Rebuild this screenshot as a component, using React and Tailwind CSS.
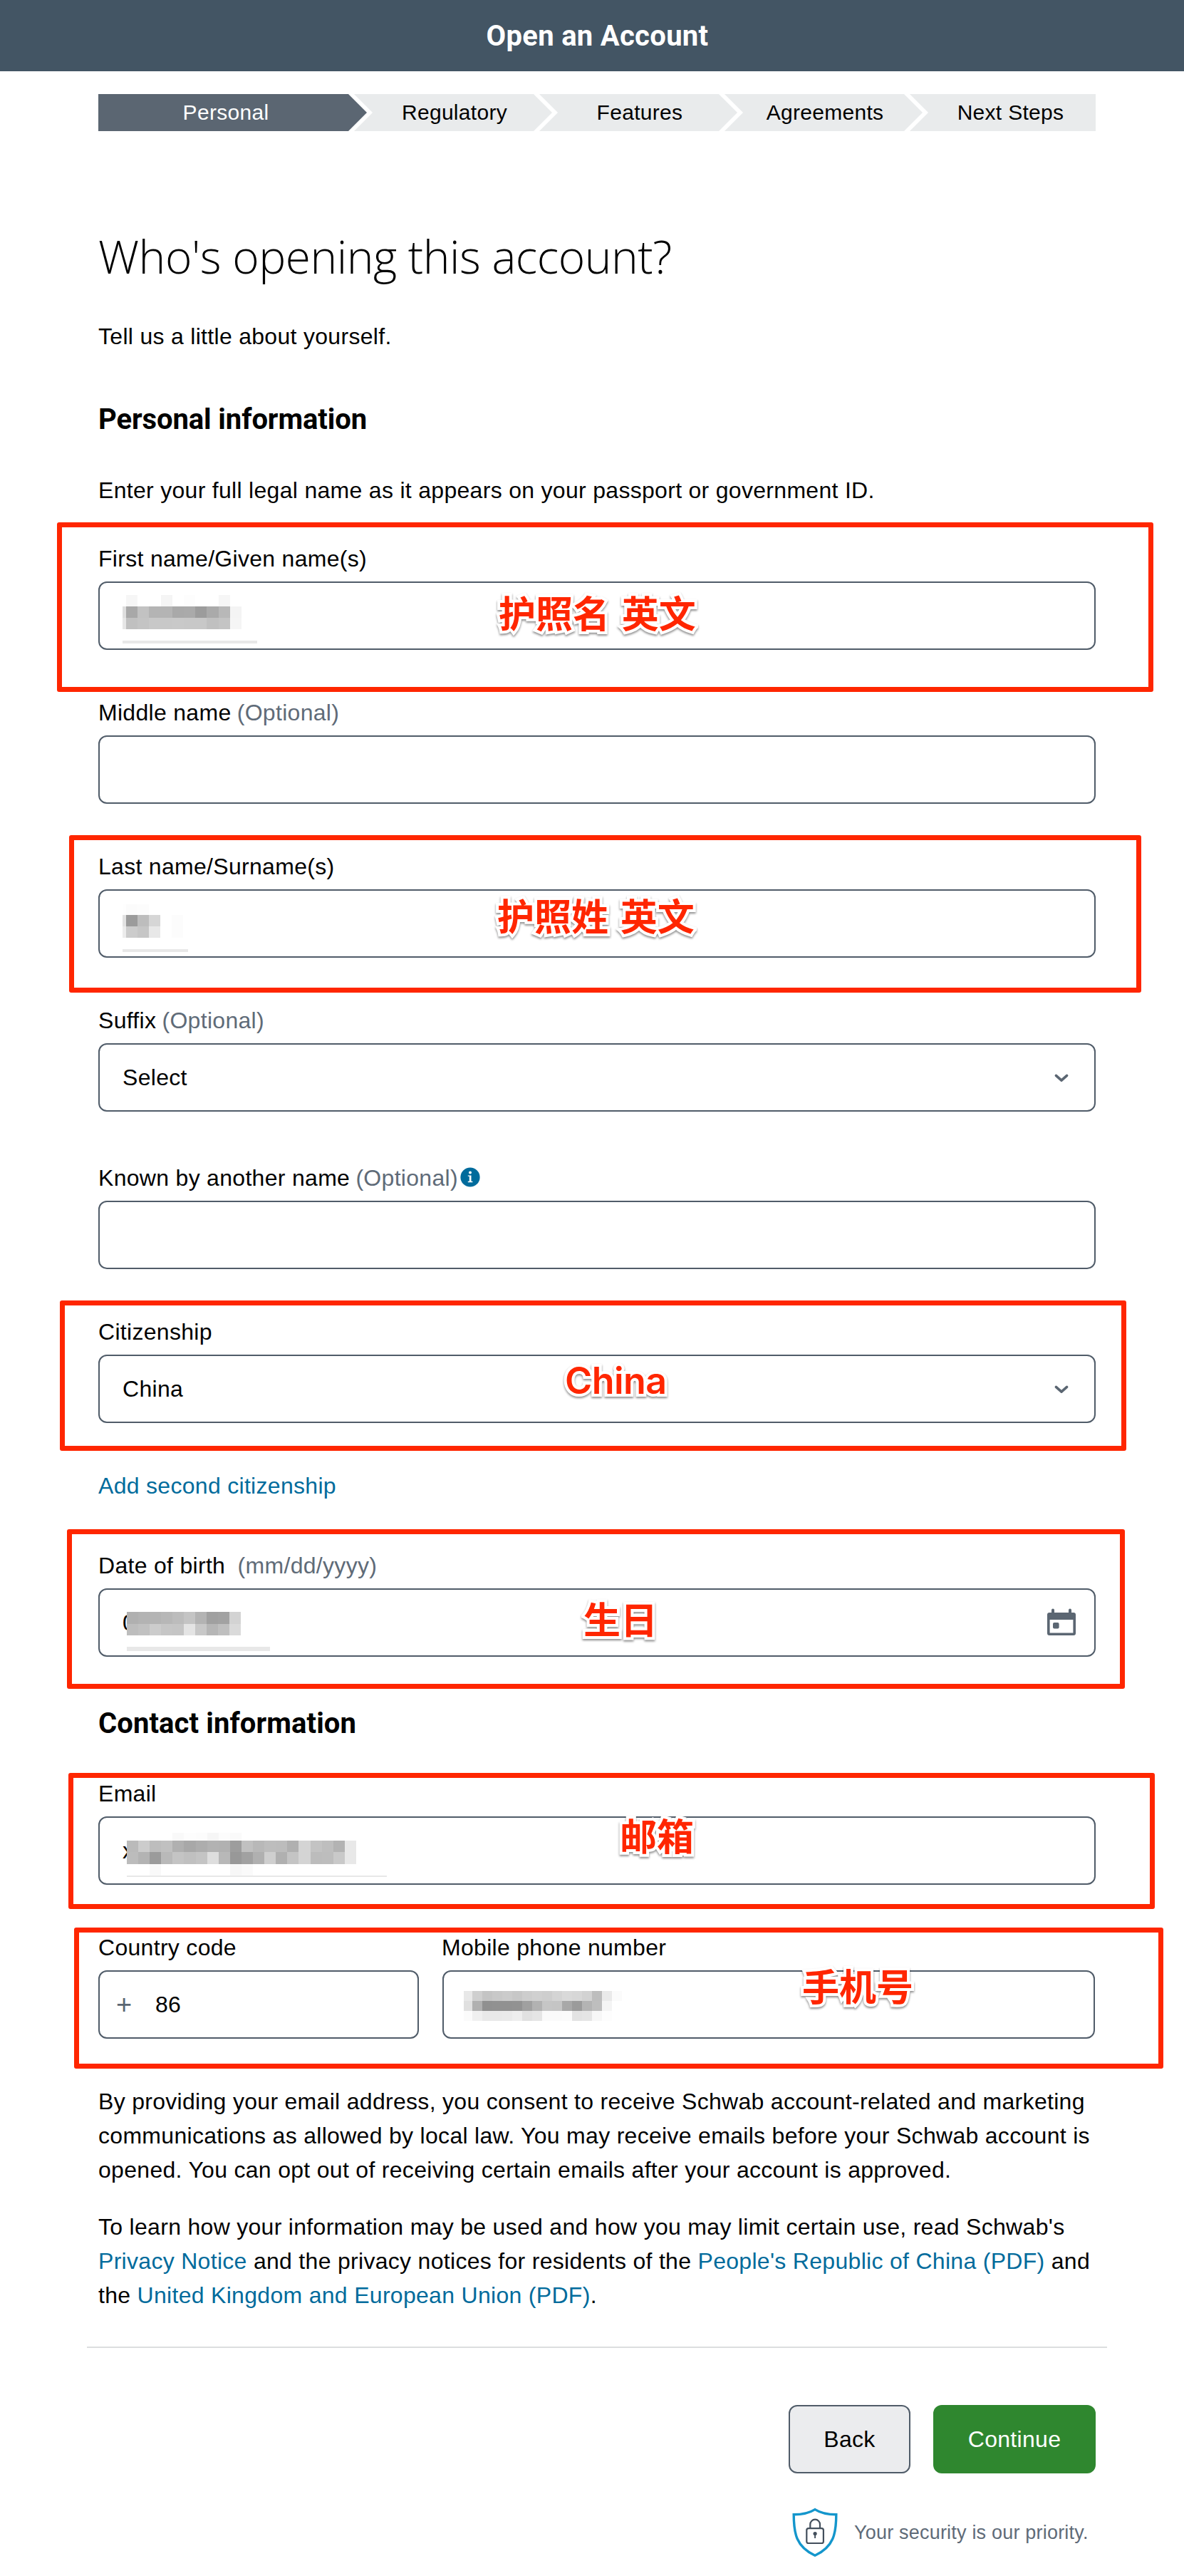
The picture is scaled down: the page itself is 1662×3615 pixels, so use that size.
const STEPS = ["Regulatory", "Features", "Agreements"];

function Stepper() {
  return (
    <nav className="mt-8 flex h-[52px] text-[30px] leading-[52px] tracking-[0.3px]">
      <div className="w-[377px] bg-[#5b6672] pr-[19px] text-center text-white [clip-path:polygon(0_0,351px_0,100%_50%,351px_100%,0_100%)]">
        Personal
      </div>
      {STEPS.map((s) => (
        <div
          key={s}
          className="-ml-[18px] w-[278px] bg-[#e9ebec] pl-1 text-center [clip-path:polygon(0_0,252px_0,100%_50%,252px_100%,0_100%,26px_50%)]"
        >
          {s}
        </div>
      ))}
      <div className="-ml-[18px] w-[261px] bg-[#e9ebec] pl-[22px] text-center [clip-path:polygon(0_0,100%_0,100%_100%,0_100%,26px_50%)]">
        Next Steps
      </div>
    </nav>
  );
}

function Field({ label, hint, info, className = "", children, overlay }) {
  return (
    <div className={"relative " + className}>
      <div className="flex h-12 items-center whitespace-pre">
        <span>{label}</span>
        {hint && <span className="-ml-px text-[#5f6b78]">{hint}</span>}
        {info && <InfoIcon />}
      </div>
      <div className="mt-2 flex h-24 items-center justify-between rounded-xl border-2 border-[#505c69] bg-white px-8">
        {children}
      </div>
      {overlay}
    </div>
  );
}

function InfoIcon() {
  return (
    <svg className="-mt-[2px] ml-[3px] size-[28px]" viewBox="0 0 28 28">
      <circle cx="14" cy="14" r="13.6" fill="#006b9c" />
      <circle cx="14" cy="7.6" r="2" fill="#fff" />
      <path d="M10.8 11.4h4.7v8.4h1.9v1.4h-6.6v-1.4h2v-7h-2z" fill="#fff" />
    </svg>
  );
}

function Chevron() {
  return (
    <svg className="-mr-[2px] size-8" viewBox="0 0 32 32" fill="none" stroke="#5b6672" strokeWidth="3.6" strokeLinecap="round" strokeLinejoin="round">
      <path d="M8.4 13.4l7.6 6.8 7.6-6.8" />
    </svg>
  );
}

function CalendarIcon() {
  return (
    <svg className="-mr-[7px] mb-[3px] h-[40px] w-[42px]" viewBox="0 0 42 40">
      <path
        fill="#5b6672"
        fillRule="evenodd"
        d="M7 3.5a2 2 0 0 1 4 0V7h20V3.5a2 2 0 0 1 4 0V7h3a3 3 0 0 1 3 3v26a3 3 0 0 1-3 3H4a3 3 0 0 1-3-3V10a3 3 0 0 1 3-3h3zM4.6 17v18.4h32.8V17z"
      />
      <rect x="9" y="21" width="8.6" height="8.4" rx="2" fill="#5b6672" />
    </svg>
  );
}

function ShieldIcon() {
  return (
    <svg className="h-[70px] w-[68px]" viewBox="15 14 68 70" fill="none">
      <path
        d="M49 16.6C42 21 32 23.8 19.2 23.8 19.2 50 22.5 69 49 81.2 75.5 69 78.8 50 78.8 23.8 66 23.8 56 21 49 16.6Z"
        stroke="#1496cc"
        strokeWidth="3.4"
      />
      <rect x="37.3" y="43.2" width="23.6" height="20.8" rx="2.6" stroke="#434f5c" strokeWidth="2.2" />
      <path d="M42.3 42.5v-5a6.85 6.85 0 0 1 13.7 0v5" stroke="#434f5c" strokeWidth="2.2" />
      <circle cx="49.1" cy="50.7" r="2.6" fill="#434f5c" />
      <path d="M49.1 51v6" stroke="#434f5c" strokeWidth="1.9" />
    </svg>
  );
}

/* Pixelated strip hiding a typed value; each row is [cell height class, edge colour, grey levels]. */
function Mosaic({ className, cell, edge, rows }) {
  return (
    <div className={"absolute " + className}>
      {rows.map(([h, edgeColor, cells], r) => (
        <div key={r} className={"flex " + h}>
          {edge && <i className={edge} style={{ backgroundColor: edgeColor || "transparent" }} />}
          {cells.split(" ").map((c, i) => (
            <i key={i} className={cell} style={{ backgroundColor: c === "-" ? "#fff" : "#" + c + c + c }} />
          ))}
        </div>
      ))}
    </div>
  );
}

function RedBox({ className }) {
  return <div className={"pointer-events-none absolute rounded-[3px] border-[7px] border-[#ff2600] " + className} />;
}

function Note({ className, children }) {
  return (
    <div
      className={
        "absolute whitespace-nowrap text-[52px] leading-[52px] text-[#ff2600] [-webkit-text-stroke:8px_white] [paint-order:stroke_fill] [filter:drop-shadow(0_2px_1.5px_rgba(0,0,0,0.45))] " +
        className
      }
    >
      {children}
    </div>
  );
}

const CJK = "font-['Noto_Sans_CJK_SC',sans-serif] font-bold tracking-normal";

function Link({ children }) {
  return <a className="text-[#006b9c]">{children}</a>;
}

export default function App() {
  return (
    <div className="min-h-[3615px] w-[1662px] overflow-hidden bg-white font-['Liberation_Sans',Arial,sans-serif] text-[32px] leading-[48px] tracking-[0.3px] text-black">
      <header className="flex h-[100px] items-center justify-center bg-[#435564] pt-px pl-[15px] font-['Roboto',sans-serif] text-[40px] font-bold tracking-[0.3px] text-white">
        Open an Account
      </header>

      <main className="ml-[138px] w-[1400px]">
        <Stepper />

        <h1 className="mt-[140px] font-['Open_Sans',sans-serif] text-[64px] leading-[72px] font-light tracking-[-0.5px] whitespace-nowrap">
          Who's opening this account?
        </h1>
        <p className="mt-[52px]">Tell us a little about yourself.</p>

        <h2 className="mt-[69px] font-['Roboto',sans-serif] text-[40px] font-bold tracking-[-0.1px]">Personal information</h2>
        <p className="mt-[51px]">Enter your full legal name as it appears on your passport or government ID.</p>

        <Field
          className="mt-12"
          label="First name/Given name(s)"
          overlay={
            <>
              <Mosaic
                className="top-[75px] left-[34px]"
                cell="w-[16.2px]"
                edge="w-[5px]"
                rows={[
                  ["h-[16px]", "#ffffff", "f6 - - f5 - fd - - f6"],
                  ["h-[16px]", "#dedede", "a8 c2 b4 b4 a9 aa 9c aa b8 f4"],
                  ["h-[16px]", "#e6e6e6", "c0 c4 c8 c8 c9 c8 c8 c0 c4 f5"],
                ]}
              />
              <div className="absolute top-[139px] left-[34px] h-1 w-[189px] bg-[#e8e8e8]" />
              <RedBox className="-top-[27px] -left-[58px] h-[238px] w-[1539px]" />
              <Note className={"top-[73px] left-[562px] [word-spacing:5px] " + CJK}>护照名 英文</Note>
            </>
          }
        />

        <Field className="mt-16" label="Middle name" hint=" (Optional)" />

        <Field
          className="mt-16"
          label="Last name/Surname(s)"
          overlay={
            <>
              <Mosaic
                className="top-[77px] left-[34px]"
                cell="w-[16px]"
                edge="w-[5px]"
                rows={[
                  ["h-[15px]", "#fefefe", "fb fc -"],
                  ["h-[16px]", "#e2e2e2", "9b bd d6 - fc"],
                  ["h-[16px]", "#ececec", "cc c6 e8 - fc"],
                ]}
              />
              <div className="absolute top-[140px] left-[34px] h-1 w-[92px] bg-[#e8e8e8]" />
              <RedBox className="-top-[20px] -left-[41px] h-[221px] w-[1505px]" />
              <Note className={"top-[66px] left-[560px] [word-spacing:5px] " + CJK}>护照姓 英文</Note>
            </>
          }
        />

        <Field className="mt-16" label="Suffix" hint=" (Optional)">
          <span>Select</span>
          <Chevron />
        </Field>

        <Field className="mt-[69px]" label="Known by another name" hint=" (Optional)" info />

        <Field
          className="mt-16"
          label="Citizenship"
          overlay={
            <>
              <RedBox className="-top-[20px] -left-[54px] h-[211px] w-[1497px]" />
              <Note className="top-[67px] left-[655px] font-['Inter',sans-serif] font-semibold tracking-[-0.6px]">China</Note>
            </>
          }
        >
          <span>China</span>
          <Chevron />
        </Field>

        <p className="mt-16">
          <Link>Add second citizenship</Link>
        </p>

        <Field
          className="mt-16"
          label="Date of birth"
          hint="  (mm/dd/yyyy)"
          overlay={
            <>
              <Mosaic
                className="top-[89px] left-[40px]"
                cell="w-[16px]"
                rows={[
                  ["h-[17px]", "", "b0 b3 b4 b7 bc c4 b3 a0 a2 d3"],
                  ["h-[16px]", "", "bd c1 cc c6 c5 e4 c8 b6 bf da"],
                ]}
              />
              <div className="absolute top-[138px] left-[40px] h-[6px] w-[201px] bg-[#e8e8e8]" />
              <RedBox className="-top-[27px] -left-[44px] h-[224px] w-[1485px]" />
              <Note className={"top-[72px] left-[681px] " + CJK}>生日</Note>
            </>
          }
        >
          <span>0</span>
          <CalendarIcon />
        </Field>

        <h2 className="mt-[70px] font-['Roboto',sans-serif] text-[40px] font-bold tracking-[0.1px]">Contact information</h2>

        <Field
          className="mt-[50px]"
          label="Email"
          overlay={
            <>
              <Mosaic
                className="top-[79px] left-[40px]"
                cell="w-[16.1px]"
                rows={[
                  ["h-[11px]", "", "- - - - f9 fd fc f6 fc fa -"],
                  ["h-[16px]", "", "ba cc bd c0 b0 a8 ad b2 b1 9d c0 b8 bd bc b0 d4 c3 be b3 e8"],
                  ["h-[17px]", "", "bc b3 9b b9 c4 c0 c4 de b8 98 a1 b0 cf b0 c4 d4 bc bd c9 e8"],
                  ["h-[16px]", "", "- - f9 - - - - - - f7 fa"],
                ]}
              />
              <div className="absolute top-[139px] left-[40px] h-[2px] w-[365px] bg-[#e8e8e8]" />
              <RedBox className="-top-[5px] -left-[42px] h-[191px] w-[1525px]" />
              <Note className={"top-[56px] left-[732px] " + CJK}>邮箱</Note>
            </>
          }
        >
          <span>x</span>
        </Field>

        <div className="relative mt-16 flex gap-[33px]">
          <Field className="w-[450px]" label="Country code">
            <div className="flex items-center">
              <span className="-ml-[9px] w-[55px] text-[38px] tracking-normal text-[#5b6672]">+</span>
              <span>86</span>
            </div>
          </Field>
          <Field
            className="w-[916px]"
            label={<span className="-ml-px">Mobile phone number</span>}
            overlay={
              <Mosaic
                className="top-[85px] left-[30px]"
                cell="w-[14px]"
                edge="w-[12px]"
                rows={[
                  ["h-[14px]", "#e8e8e8", "cf c4 c8 cb c7 cd d0 ce d4 d9 d7 d2 bd ea fb"],
                  ["h-[14px]", "#e0e0e0", "b0 90 91 91 92 a0 b2 c6 c5 a8 9b b4 be f4"],
                  ["h-[14px]", "#fbfbfb", "f0 e9 e9 ea ee e1 e5 fa fa fb e3 e5 f7 fd"],
                ]}
              />
            }
          />
          <RedBox className="-top-[4px] -left-[34px] h-[198px] w-[1529px]" />
          <Note className={"top-[51px] left-[988px] " + CJK}>手机号</Note>
        </div>

        <p className="mt-16 whitespace-nowrap">
          By providing your email address, you consent to receive Schwab account-related and marketing
          <br />
          communications as allowed by local law. You may receive emails before your Schwab account is
          <br />
          opened. You can opt out of receiving certain emails after your account is approved.
        </p>
        <p className="mt-8 whitespace-nowrap">
          To learn how your information may be used and how you may limit certain use, read Schwab's
          <br />
          <Link>Privacy Notice</Link> and the privacy notices for residents of the <Link>People's Republic of China (PDF)</Link> and
          <br />
          the <Link>United Kingdom and European Union (PDF)</Link>.
        </p>

        <hr className="-mx-4 mt-12 border-t-2 border-[#dcdedf]" />

        <div className="mt-20 flex justify-end gap-8">
          <button className="h-24 w-[171px] rounded-xl border-2 border-[#505c69] bg-[#ebecee]">Back</button>
          <button className="h-24 w-[228px] rounded-xl bg-[#2f872f] text-white">Continue</button>
        </div>

        <div className="mt-12 ml-[972px] flex h-[70px] items-center gap-[21px]">
          <ShieldIcon />
          <span className="text-[27px] leading-10 tracking-[0.2px] whitespace-nowrap text-[#5f6b78]">Your security is our priority.</span>
        </div>
      </main>
    </div>
  );
}
